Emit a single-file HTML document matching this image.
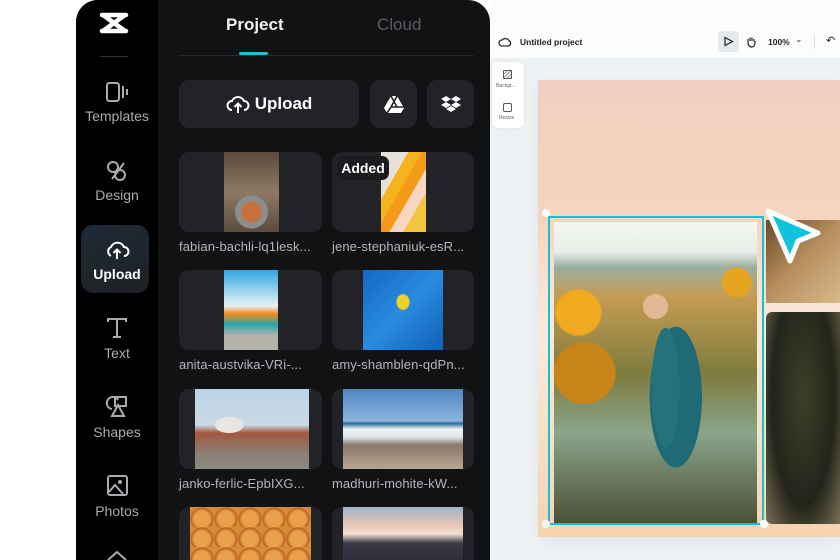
<!DOCTYPE html>
<html><head><meta charset="utf-8"><style>
*{margin:0;padding:0;box-sizing:border-box}
body{width:840px;height:560px;overflow:hidden;background:#fff;font-family:"Liberation Sans",sans-serif;position:relative}
.abs{position:absolute}
#dark{left:76px;top:0;width:414px;height:560px;background:#111214;border-radius:22px 22px 0 0;overflow:hidden}
#side{left:0;top:0;width:82px;height:560px;background:#000}
.si{position:absolute;left:0;width:82px;text-align:center;color:#a9abb0;font-size:14px}
.si svg{display:block;margin:0 auto 5px}
.lbl{position:absolute;color:#b4b6bb;font-size:13px;white-space:nowrap;letter-spacing:.1px}
.card{position:absolute;background:#222327;border-radius:10px;overflow:hidden}
.card div{position:absolute;top:0;bottom:0}
.btn{position:absolute;background:#222327;border-radius:10px;top:80px;height:48px;display:flex;align-items:center;justify-content:center;color:#fff}
</style></head><body>
<div id="dark" class="abs">
 <div id="side" class="abs">
  <svg class="abs" style="left:22px;top:10px" width="32" height="26" viewBox="0 0 32 26"><path d="M4 5 L28 5 M4 21 L28 21 M5 5 L27 21 M27 5 L5 21" stroke="#fff" stroke-width="4.5" fill="none" stroke-linecap="round"/></svg>
  <div class="abs" style="left:24px;top:56px;width:28px;height:1px;background:#333"></div>
  <div class="si" style="top:81px"><svg width="26" height="22" viewBox="0 0 26 22"><rect x="3" y="2" width="12" height="18" rx="2.5" stroke="#a9abb0" stroke-width="2" fill="none"/><path d="M19 5v12M23 8v6" stroke="#a9abb0" stroke-width="2"/></svg>Templates</div>
  <div class="si" style="top:160px"><svg width="26" height="22" viewBox="0 0 26 22"><circle cx="9" cy="7" r="5" stroke="#a9abb0" stroke-width="2" fill="none"/><circle cx="16" cy="15" r="5" stroke="#a9abb0" stroke-width="2" fill="none"/><path d="M8 19 L20 3" stroke="#a9abb0" stroke-width="2"/></svg>Design</div>
  <div class="abs" style="left:5px;top:225px;width:68px;height:68px;border-radius:12px;background:linear-gradient(160deg,#1d2a36,#1e2125)"></div>
  <div class="si" style="top:239px;color:#fff;font-weight:bold;font-size:14px"><svg width="26" height="22" viewBox="0 0 26 22"><path d="M7 17 A5 5 0 0 1 7 8 A7 7 0 0 1 20 8 A4.5 4.5 0 0 1 20 17" stroke="#fff" stroke-width="2" fill="none"/><path d="M13 20V11M9.5 14l3.5-3.5 3.5 3.5" stroke="#fff" stroke-width="2" fill="none"/></svg>Upload</div>
  <div class="si" style="top:316px"><svg width="26" height="24" viewBox="0 0 26 24"><path d="M4 6V3h18v3M13 3v18M9 21h8" stroke="#a9abb0" stroke-width="2" fill="none"/></svg>Text</div>
  <div class="si" style="top:395px"><svg width="26" height="24" viewBox="0 0 26 24"><path d="M8 14 A6 6 0 1 1 14 5" stroke="#a9abb0" stroke-width="2" fill="none"/><rect x="11" y="2" width="11" height="9" stroke="#a9abb0" stroke-width="2" fill="none"/><path d="M14 10 L8 21 H20 Z" stroke="#a9abb0" stroke-width="2" fill="none"/></svg>Shapes</div>
  <div class="si" style="top:474px"><svg width="26" height="24" viewBox="0 0 26 24"><rect x="4" y="2" width="19" height="19" rx="2" stroke="#a9abb0" stroke-width="2" fill="none"/><circle cx="16" cy="8" r="2" fill="#a9abb0"/><path d="M5 18 L11 11 L19 20" stroke="#a9abb0" stroke-width="2" fill="none"/></svg>Photos</div>
  <svg class="abs" style="left:28px;top:548px" width="26" height="14" viewBox="0 0 26 14"><path d="M4 12 L13 4 L22 12" stroke="#a9abb0" stroke-width="2" fill="none"/></svg>
 </div>
 <div class="abs" style="left:150px;top:15px;font-size:17px;font-weight:bold;color:#f2f2f2">Project</div>
 <div class="abs" style="left:301px;top:15px;font-size:17px;color:#5a5c62">Cloud</div>
 <div class="abs" style="left:103px;top:55px;width:295px;height:1px;background:#26272b"></div>
 <div class="abs" style="left:163px;top:52px;width:29px;height:3px;border-radius:2px;background:#19c1d6"></div>
 <div class="btn" style="left:103px;width:180px;font-weight:bold;font-size:17px"><svg width="24" height="20" viewBox="0 0 24 20" style="margin-right:5px"><path d="M6 16 A4.5 4.5 0 0 1 6 7 A6.5 6.5 0 0 1 18 7 A4.5 4.5 0 0 1 18 16" stroke="#fff" stroke-width="2" fill="none"/><path d="M12 19V10M8.5 13l3.5-3.5 3.5 3.5" stroke="#fff" stroke-width="2" fill="none"/></svg>Upload</div>
 <div class="btn" style="left:294px;width:47px"><svg width="20" height="18" viewBox="0 0 20 18"><path d="M7 1h6l7 12-3 5H3L0 13z" fill="#fff"/><path d="M7 1l6 11M13 1L7 12M3 18l4-6h13" stroke="#222327" stroke-width="1.6" fill="none"/></svg></div>
 <div class="btn" style="left:351px;width:47px"><svg width="20" height="18" viewBox="0 0 20 18"><path d="M5 1l5 3-5 3-5-3zM15 1l5 3-5 3-5-3zM5 7l5 3-5 3-5-3zM15 7l5 3-5 3-5-3zM10 11l5 3-5 3-5-3z" fill="#fff"/></svg></div>
 <div class="card" style="left:103px;top:152px;width:143px;height:80px"><div style="left:45px;width:55px;background:radial-gradient(circle at 50% 75%,#c86f3e 0 10px,#8a8e8e 11px 16px,transparent 17px),linear-gradient(#5b4a3a,#8d7a66 50%,#5a4b3e)"></div></div>
 <div class="card" style="left:256px;top:152px;width:142px;height:80px"><div style="left:49px;width:45px;background:linear-gradient(120deg,#e6e2da 0 30%,#f5b41e 30% 45%,#f39a18 45% 60%,#f7d7c4 60% 75%,#f4c53c 75%)"></div></div>
 <div class="abs" style="left:261px;top:156px;width:52px;height:24px;border-radius:7px;background:#1a1b1e;color:#fff;font-weight:bold;font-size:14px;line-height:24px;text-align:center">Added</div>
 <div class="lbl" style="left:103px;top:239px">fabian-bachli-lq1lesk...</div>
 <div class="lbl" style="left:256px;top:239px">jene-stephaniuk-esR...</div>
 <div class="card" style="left:103px;top:270px;width:143px;height:80px"><div style="left:45px;width:54px;background:linear-gradient(#2fa6e0 0,#bfe2f2 35%,#e7f0f3 45%,#f08a1c 55%,#27a7a8 68%,#b6b3ac 82%)"></div></div>
 <div class="card" style="left:256px;top:270px;width:142px;height:80px"><div style="left:31px;width:80px;background:radial-gradient(ellipse at 50% 40%,#f0d12a 0 6px,transparent 7px),linear-gradient(135deg,#1268c4,#2a8be0 50%,#1060b8)"></div></div>
 <div class="lbl" style="left:103px;top:357px">anita-austvika-VRi-...</div>
 <div class="lbl" style="left:256px;top:357px">amy-shamblen-qdPn...</div>
 <div class="card" style="left:103px;top:389px;width:143px;height:80px"><div style="left:16px;width:114px;background:radial-gradient(ellipse at 30% 45%,#e8e6e0 0 14px,transparent 15px),linear-gradient(#bcd3e6 0,#c9dae6 45%,#a4573f 55%,#8a7f74 80%,#8c8a84)"></div></div>
 <div class="card" style="left:256px;top:389px;width:142px;height:80px"><div style="left:11px;width:120px;background:linear-gradient(#4f86c2 0,#8db6de 40%,#2a6aa0 43%,#eef2f4 50%,#dfe6ea 60%,#8a7868 70%,#b8a592 100%)"></div></div>
 <div class="lbl" style="left:103px;top:476px">janko-ferlic-EpbIXG...</div>
 <div class="lbl" style="left:256px;top:476px">madhuri-mohite-kW...</div>
 <div class="card" style="left:103px;top:507px;width:143px;height:60px"><div style="left:11px;width:121px;background:radial-gradient(circle at 50% 60%,#e8a04a 0 8px,#b86420 11px,transparent 12px) 0 0/24px 20px,#d98a36"></div></div>
 <div class="card" style="left:256px;top:507px;width:142px;height:60px"><div style="left:11px;width:120px;background:linear-gradient(#9fb5cc 0,#e9c4b2 30%,#f4e2d4 45%,#3a3a48 60%,#2a2b36)"></div></div>
</div>
<div class="abs" style="left:490px;top:0;width:350px;height:58px;background:#fbfcfc"></div>
<div class="abs" style="left:490px;top:58px;width:350px;height:502px;background:#eef2f5"></div>
<svg class="abs" style="left:498px;top:36px" width="14" height="12" viewBox="0 0 14 12"><path d="M4 10 A3 3 0 0 1 4 4 A4.5 4.5 0 0 1 11 4.5 A3 3 0 0 1 10.5 10 Z" stroke="#333" stroke-width="1.3" fill="none"/></svg>
<div class="abs" style="left:520px;top:37px;font-size:8.5px;font-weight:bold;color:#222">Untitled project</div>
<div class="abs" style="left:718px;top:31px;width:21px;height:21px;border-radius:4px;background:#e5eaee"></div>
<svg class="abs" style="left:723px;top:36px" width="11" height="11" viewBox="0 0 11 11"><path d="M2 1.5 L9.5 5.5 L2 9.5 Z" stroke="#222" stroke-width="1.2" fill="none"/></svg>
<svg class="abs" style="left:745px;top:35px" width="12" height="13" viewBox="0 0 12 13"><path d="M3 7V4M5 6V2.5M7 6V2.5M9 6.5V4M3 7 C3 11 5 12 7 12 S10 10 10 7 V6" stroke="#222" stroke-width="1.2" fill="none"/></svg>
<div class="abs" style="left:768px;top:37px;font-size:8.5px;color:#222;font-weight:bold">100%</div>
<div class="abs" style="left:795px;top:34px;font-size:9px;color:#333">⌄</div>
<div class="abs" style="left:814px;top:35px;width:1px;height:14px;background:#ddd"></div>
<div class="abs" style="left:826px;top:34px;font-size:11px;color:#222">↶</div>
<div class="abs" style="left:492px;top:62px;width:32px;height:66px;background:#fff;border-radius:6px;box-shadow:0 1px 4px rgba(0,0,0,.06)"></div>
<div class="abs" style="left:503px;top:70px;width:9px;height:9px;border:1.2px solid #555;border-radius:1px;background:repeating-linear-gradient(135deg,#fff 0 1.5px,#999 1.5px 2.5px)"></div>
<div class="abs" style="left:496px;top:83px;font-size:5px;color:#666">Backgr...</div>
<div class="abs" style="left:503px;top:103px;width:9px;height:9px;border:1.2px solid #555;border-radius:2px"></div>
<div class="abs" style="left:499px;top:115px;font-size:5px;color:#666">Resize</div>
<div class="abs" style="left:538px;top:80px;width:302px;height:457px;background:linear-gradient(#f2cfc0 0,#f6d4bd 30%,#fbeadb 55%,#f5dfc3 80%,#f6d2b0 100%);box-shadow:0 4px 14px rgba(0,0,0,.06)"></div>
<div class="abs" style="left:766px;top:220px;width:74px;height:83px;background:linear-gradient(135deg,#6a4a2a,#b89060 50%,#d8b888)"></div>
<div class="abs" style="left:766px;top:312px;width:74px;height:212px;border-radius:6px 0 0 6px;background:radial-gradient(ellipse at 50% 40%,#3c4028,#22251a 60%,#7a7056 100%)"></div>
<div class="abs" style="left:554px;top:222px;width:203px;height:302px;background:
radial-gradient(ellipse 14px 60px at 55% 55%,#24727c 0 100%,transparent 101%),
radial-gradient(ellipse 26px 70px at 60% 58%,#1f6a74 0 100%,transparent 101%),
radial-gradient(circle at 50% 28%,#e3b894 0 12px,transparent 13px),
radial-gradient(circle at 12% 30%,#f0aa1e 0 22px,transparent 24px),
radial-gradient(circle at 15% 50%,#c88418 0 30px,transparent 32px),
radial-gradient(circle at 90% 20%,#e6a420 0 14px,transparent 16px),
linear-gradient(#f6f6f2 0,#e7eee9 10%,#9aaea0 15%,#c49c52 25%,#7e7c3e 50%,#8aa48a 70%,#4a5036 100%)"></div>
<div class="abs" style="left:548px;top:216px;width:216px;height:309px;border:2px solid #12c3d8"></div>
<div class="abs" style="left:542px;top:209px;width:8px;height:8px;border-radius:50%;background:#fff"></div>
<div class="abs" style="left:542px;top:520px;width:8px;height:8px;border-radius:50%;background:#fff"></div>
<div class="abs" style="left:760px;top:520px;width:8px;height:8px;border-radius:50%;background:#fff"></div>
<svg class="abs" style="left:760px;top:203px" width="66" height="66" viewBox="0 0 66 66"><path d="M8 8 L58 30 L38 38 L30 58 Z" fill="#0fc3dc" stroke="#fff" stroke-width="5" stroke-linejoin="round"/></svg>
</body></html>
